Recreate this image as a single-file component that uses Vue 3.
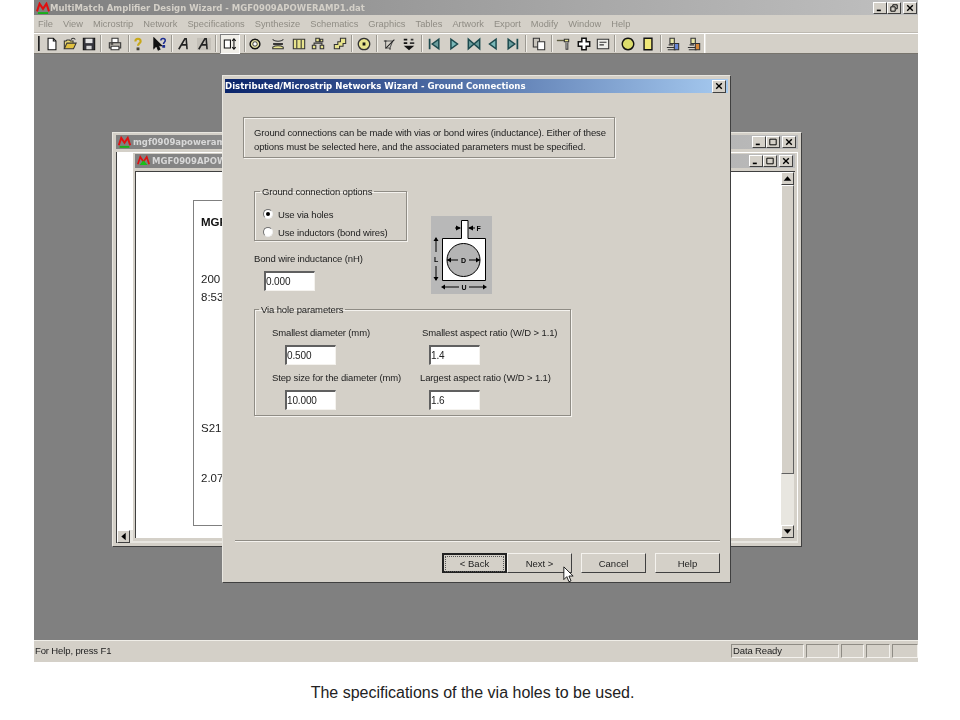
<script setup>
import { computed } from 'vue'

const menus = ['File', 'View', 'Microstrip', 'Network', 'Specifications', 'Synthesize', 'Schematics', 'Graphics', 'Tables', 'Artwork', 'Export', 'Modify', 'Window', 'Help']

const K = '#111'
const Y = '#e8e48c'
const T = '#1c4a4e'
// each icon: list of [path, fill, stroke, optional width] in a 16 box
const icons = {
  newdoc: [['M3.5 1.5h6l3 3v10h-9z', '#fff', K], ['M9.5 1.5v3h3', 'none', K]],
  open: [['M1.5 13.5v-9h2l1-1h3l1 1h3v2', '#e8d878', '#333'], ['M1.5 13.5l3-6.5h10.500l-3 6.5z', '#e0c040', '#333'], ['M9 3c2-2 4-2 5 0', 'none', '#333']],
  save: [['M1.5 1.5h13v13h-13z', '#34343c', K], ['M4 2h8v5H4z', '#e4e4e4', 'none'], ['M5 10h6v4H5z', '#d8d8d8', 'none']],
  print: [['M4.5 1.5h7v5h-7z', '#fff', '#333'], ['M1.5 6.5h13v6h-13z', '#b8b4ac', '#333'], ['M3.5 10.5h9v4h-9z', '#fff', '#333'], ['M3 8h3', 'none', K]],
  help: [['M5 5c0-4 6-4 6 0 0 2-3 2-3 5', 'none', '#c8a818', 2.4], ['M7 12.5h2v2H7z', '#c8a818', '#333']],
  whats: [['M1 1v12l3-3 2 5 2-1-2-4h4z', K, K], ['M9 4c0-3 5-3 5 0 0 2-2 2-2 4M11.5 10h1.5v1.5h-1.5z', 'none', '#1c2c90', 1.7]],
  fontA: [['M2 14L9 2h1.5l1 12M5 9h7', 'none', '#222', 1.8]],
  fontB: [['M0 1h16v14H0z', '#c4c0b8', 'none'], ['M2 14L9 2h1.5l1 12M5 9h7', 'none', '#222', 1.8]],
  toggle: [['M1.5 3.5h7v9h-7z', '#fff', K], ['M12.5 2v12M10.5 4.5l2-2.5 2 2.5M10.5 11.5l2 2.5 2-2.5', 'none', K]],
  ring: [['M8 2.5a5.5 5.5 0 1 0 .01 0z', '#e4e0a0', K, 1.6], ['M8 5.5a2.5 2.5 0 1 0 .01 0z', '#fff', '#555']],
  hourglass: [['M2 2.5c1 3 11 3 12 0', 'none', '#333'], ['M3 7.5h10v1H3z', '#333', '#333'], ['M2 13.5h12v-2c-3-2-9-2-12 0z', Y, '#333']],
  columns: [['M1.5 2.5h13v11h-13z', Y, '#333'], ['M5.5 3v10M10.5 3v10', 'none', '#333']],
  nodes: [['M5.5 1.5h4v4h-4zM1.5 9.5h4v4h-4zM10.5 9.5h4v4h-4zM10.5 2.5h3v3h-3z', Y, '#333'], ['M3.5 9V7h9v2', 'none', '#333']],
  step: [['M8.5 1.5h6v6h-3v3h-4v3h-6v-5h4v-3h3z', Y, '#333']],
  target: [['M8 1.5a6.5 6.5 0 1 0 .01 0z', Y, '#333', 1.5], ['M7 7h2v2H7z', K, K]],
  probe: [['M3 4.5h8l-3 8H3z', 'none', '#555'], ['M3 13L13 3M1 4.5h3M8 14.5v-2', 'none', '#222']],
  stack: [['M2 2h4v2H2zM2 6h4v2H2z', K, 'none'], ['M10 2h3v2h-3zM9 6h5v2H9z', '#333', 'none'], ['M2 10h12l-6 5z', K, 'none']],
  first: [['M3 2v12', 'none', T, 2], ['M13.5 2.5v11L6 8z', '#6a9c9c', T, 1.7]],
  play: [['M4.5 2.5v11L12 8z', '#7ab8b8', T, 1.7]],
  bowtie: [['M1.5 2.5v11L8 8zM14.5 2.5v11L8 8z', '#6a9c9c', T, 1.7]],
  back: [['M11.5 2.5v11L4 8z', '#7ab8b8', T, 1.7]],
  last: [['M13 2v12', 'none', T, 2], ['M2.5 2.5v11L10 8z', '#6a9c9c', T, 1.7]],
  copy: [['M1.5 1.5h7v10h-7z', '#c8c4bc', '#333'], ['M6.5 5.5h8v9h-8z', '#fff', '#333']],
  wire: [['M1 4h9', 'none', '#5a5a40', 1.6], ['M9.5 2.5h5v3h-5z', Y, '#333'], ['M11.5 6v8h2v-8', '#fff', '#333']],
  cross: [['M5.5 1.5h5v4h4v5h-4v4h-5v-4h-4v-5h4z', '#fff', K, 1.7]],
  list: [['M1.5 2.5h13v11h-13z', '#eeeeea', '#333'], ['M4 6h8M4 9h5', 'none', '#333']],
  disc: [['M8 1.5a6.5 6.5 0 1 0 .01 0z', '#dcdc6c', K, 1.6]],
  rect: [['M3.5 1.5h9v13h-9z', '#f0e878', K, 1.6]],
  user1: [['M4.5 1.5h5v6h-5z', '#e8e8a8', '#333'], ['M1 12h9M2 14.5h9M3 9h5', 'none', '#333'], ['M9.5 7.5h5v7h-5z', '#6888d8', '#333']],
  user2: [['M4.5 1.5h5v6h-5z', '#e8e8a8', '#333'], ['M1 12h9M2 14.5h9M3 9h5', 'none', '#333'], ['M9.5 7.5h5v7h-5z', '#d88838', '#333']]
}

const tools = [
  { x: 39, grip: true }, { x: 52, i: 'newdoc' }, { x: 70, i: 'open' }, { x: 89, i: 'save' }, { x: 101 },
  { x: 115, i: 'print' }, { x: 129 }, { x: 138, i: 'help' }, { x: 160, i: 'whats' }, { x: 172 },
  { x: 184, i: 'fontA' }, { x: 204, i: 'fontB' }, { x: 216 }, { x: 230, i: 'toggle', on: true }, { x: 245 },
  { x: 255, i: 'ring' }, { x: 278, i: 'hourglass' }, { x: 299, i: 'columns' }, { x: 318, i: 'nodes' },
  { x: 340, i: 'step' }, { x: 352 }, { x: 364, i: 'target' }, { x: 377 }, { x: 390, i: 'probe' },
  { x: 409, i: 'stack' }, { x: 422 }, { x: 434, i: 'first' }, { x: 454, i: 'play' }, { x: 474, i: 'bowtie' },
  { x: 493, i: 'back' }, { x: 513, i: 'last' }, { x: 526 }, { x: 539, i: 'copy' }, { x: 552 },
  { x: 563, i: 'wire' }, { x: 584, i: 'cross' }, { x: 603, i: 'list' }, { x: 615 }, { x: 628, i: 'disc' },
  { x: 648, i: 'rect' }, { x: 661 }, { x: 673, i: 'user1' }, { x: 694, i: 'user2' }, { x: 705, edge: true }
]

// gaps between items follow from the x centres read off the toolbar
const toolRow = computed(() => {
  let end = 34
  return tools.map(t => {
    const w = t.i ? 14 : 2
    const gap = t.x - w / 2 - end
    end = t.x + w / 2
    return { ...t, gap }
  })
})

const viaFields = [
  { label: 'Smallest diameter (mm)', value: '0.500', cls: 'a' },
  { label: 'Smallest aspect ratio (W/D > 1.1)', value: '1.4', cls: 'b' },
  { label: 'Step size for the diameter (mm)', value: '10.000', cls: 'a' },
  { label: 'Largest aspect ratio (W/D > 1.1)', value: '1.6', cls: 'c' }
]
</script>

<template>
  <div class="page">
    <div class="app">
      <div class="app-title">
        <svg class="logo" viewBox="0 0 16 14"><path d="M1 11L4 2l4 6 4-6 3 9" fill="none" stroke="#e01010" stroke-width="2.4"/><path d="M2 13h12" stroke="#18b018" stroke-width="2.4"/></svg>
        <span class="app-name">MultiMatch Amplifier Design Wizard - MGF0909APOWERAMP1.dat</span>
        <div class="caption-btns">
          <button class="cap"><svg viewBox="0 0 10 10"><path d="M1 8h5" stroke="#000" stroke-width="2"/></svg></button>
          <button class="cap"><svg viewBox="0 0 10 10"><path d="M3.500 2.500V1h5.500v5H7.500M1 3.500h5.500v5.500H1z" fill="none" stroke="#000" stroke-width="1.200"/></svg></button>
          <button class="cap gap2"><svg viewBox="0 0 10 10"><path d="M1.500 1.500l7 7M8.500 1.500l-7 7" stroke="#000" stroke-width="1.700"/></svg></button>
        </div>
      </div>

      <div class="menubar">
        <span v-for="m in menus" :key="m" class="menu-item">{{ m }}</span>
      </div>

      <div class="toolbar">
        <template v-for="t in toolRow" :key="t.x">
          <span v-if="!t.i" class="tb-sep" :class="{ grip: t.grip, edge: t.edge }" :style="{ marginLeft: t.gap + 'px' }"></span>
          <span v-else class="tb-btn" :class="{ on: t.on }" :style="{ marginLeft: t.gap + 'px' }">
            <svg viewBox="0 0 16 16" width="14" height="14">
              <path v-for="(p, n) in icons[t.i]" :key="n" :d="p[0]" :fill="p[1]" :stroke="p[2]" :stroke-width="p[3] || 1.2"/>
            </svg>
          </span>
        </template>
      </div>

      <div class="workspace">
        <!-- mdi windows sit on a free canvas -->
        <div class="mdi outer">
          <div class="mdi-title">
            <svg class="logo small" viewBox="0 0 16 14"><path d="M1 11L4 2l4 6 4-6 3 9" fill="none" stroke="#e01010" stroke-width="2.4"/><path d="M2 13h12" stroke="#18b018" stroke-width="2.4"/></svg>
            <span class="mdi-name">mgf0909apoweramp1</span>
            <div class="mdi-btns">
              <button class="cap"><svg viewBox="0 0 10 10"><path d="M1 8h5" stroke="#000" stroke-width="2"/></svg></button>
              <button class="cap"><svg viewBox="0 0 10 10"><path d="M1 1.500h8v7H1z" fill="none" stroke="#000" stroke-width="1.200"/></svg></button>
              <button class="cap gap2"><svg viewBox="0 0 10 10"><path d="M1.500 1.500l7 7M8.500 1.500l-7 7" stroke="#000" stroke-width="1.700"/></svg></button>
            </div>
          </div>
          <div class="outer-body">
            <div class="outer-client"></div>
            <div class="hscroll">
              <span class="sb-btn"><svg viewBox="0 0 10 10"><path d="M3 5l4-3.500v7z" fill="#000"/></svg></span>
            </div>
          </div>
        </div>

        <div class="mdi inner">
          <div class="mdi-title">
            <svg class="logo small" viewBox="0 0 16 14"><path d="M1 11L4 2l4 6 4-6 3 9" fill="none" stroke="#e01010" stroke-width="2"/><path d="M3 12l5-6 5 6z" fill="#18c018"/></svg>
            <span class="mdi-name">MGF0909APOWERAMP1</span>
            <div class="mdi-btns">
              <button class="cap"><svg viewBox="0 0 10 10"><path d="M1 8h5" stroke="#000" stroke-width="2"/></svg></button>
              <button class="cap"><svg viewBox="0 0 10 10"><path d="M1 1.500h8v7H1z" fill="none" stroke="#000" stroke-width="1.200"/></svg></button>
              <button class="cap gap2"><svg viewBox="0 0 10 10"><path d="M1.500 1.500l7 7M8.500 1.500l-7 7" stroke="#000" stroke-width="1.700"/></svg></button>
            </div>
          </div>
          <div class="inner-main">
            <div class="doc-area">
              <div class="sheet">
                <div class="sheet-head">MGF</div>
                <div class="sheet-line l1">200</div>
                <div class="sheet-line l1b">8:53</div>
                <div class="sheet-line l2">S21</div>
                <div class="sheet-line l3">2.07</div>
              </div>
            </div>
            <div class="vscroll">
              <span class="sb-btn"><svg viewBox="0 0 10 10"><path d="M5 3L1.500 7h7z" fill="#000"/></svg></span>
              <span class="sb-track"><span class="sb-thumb"></span></span>
              <span class="sb-btn"><svg viewBox="0 0 10 10"><path d="M5 7L1.500 3h7z" fill="#000"/></svg></span>
            </div>
          </div>
        </div>

        <div class="dialog">
          <div class="dlg-title">
            <span>Distributed/Microstrip Networks Wizard - Ground Connections</span>
            <button class="cap dlg-close"><svg viewBox="0 0 10 10"><path d="M1.500 1.500l7 7M8.500 1.500l-7 7" stroke="#000" stroke-width="1.700"/></svg></button>
          </div>
          <div class="dlg-body">
            <div class="intro">
              Ground connections can be made with vias or bond wires (inductance). Either of these<br>
              options must be selected here, and the associated parameters must be specified.
            </div>

            <div class="ground-row">
              <div class="ground-left">
                <fieldset class="group ground">
                  <legend>Ground connection options</legend>
                  <label class="radio"><span class="dot checked"></span>Use via holes</label>
                  <label class="radio"><span class="dot"></span>Use inductors (bond wires)</label>
                </fieldset>
                <div class="bond-label">Bond wire inductance (nH)</div>
                <div class="field bond-field">0.000</div>
              </div>
              <svg class="via-pic" viewBox="0 0 61 78">
                <rect width="61" height="78" fill="#b8b8b8"/>
                <path d="M11.500 22.500H30.500V4.500h6.500v18h17.500v42h-43z" fill="#fff" stroke="#000" stroke-width="1"/>
                <circle cx="32.500" cy="44" r="16.500" fill="#b4b4b4" stroke="#000"/>
                <path d="M24 12h5M38 12h6M5 22v14M5 50v14M16 44h11M38 44h11M13 71h15M38 71h15" stroke="#000" fill="none"/>
                <path d="M25 9.500l5 2.500-5 2.500zM42 9.500l-5 2.500 5 2.500zM2.500 25L5 21l2.500 4zM2.500 61L5 65l2.500-4zM20 41.500L16 44l4 2.500zM45 41.500L49 44l-4 2.500zM14 68.500L10 71l4 2.500zM52 68.500L56 71l-4 2.500z" fill="#000"/>
                <text x="45.500" y="15" class="pic-t">F</text>
                <text x="3" y="46" class="pic-t">L</text>
                <text x="30" y="47" class="pic-t">D</text>
                <text x="30.500" y="74" class="pic-t">U</text>
              </svg>
            </div>

            <fieldset class="group via">
              <legend>Via hole parameters</legend>
              <div class="via-grid">
                <div v-for="f in viaFields" :key="f.label" class="via-cell" :class="f.cls">
                  <div class="via-label">{{ f.label }}</div>
                  <div class="field">{{ f.value }}</div>
                </div>
              </div>
            </fieldset>

            <div class="spacer"></div>
            <div class="rule"></div>
            <div class="dlg-buttons">
              <button class="btn default"><span class="focus">&lt; Back</span></button>
              <button class="btn next">Next &gt;</button>
              <button class="btn">Cancel</button>
              <button class="btn">Help</button>
            </div>
          </div>
          <svg class="cursor" viewBox="0 0 13 20"><path d="M1 1v15l3.500-3.500L7 18.500l2.500-1L7 11.800h5z" fill="#fff" stroke="#000"/></svg>
        </div>
      </div>

      <div class="statusbar">
        <span class="st-main">For Help, press F1</span>
        <span class="st-cell data">Data Ready</span>
        <span class="st-cell w1"></span>
        <span class="st-cell w2"></span>
        <span class="st-cell w4"></span>
        <span class="st-cell w3"></span>
      </div>
    </div>
    <p class="caption">The specifications of the via holes to be used.</p>
  </div>
</template>

<style scoped>
.page { width: 960px; height: 720px; background: #fff; padding-left: 34px; box-sizing: border-box; font-family: "Liberation Sans", Arial, sans-serif; overflow: hidden; }
.app { width: 884px; height: 662px; background: #d4d0c8; display: flex; flex-direction: column; filter: blur(0.3px); }

.app-title { height: 15px; flex: none; display: flex; align-items: center; padding-left: 2px; background: linear-gradient(90deg, #7f7f7f, #c0c0c0); }
.logo { width: 14px; height: 12px; flex: none; }
.logo.small { width: 13px; height: 12px; }
.app-name { font: bold 8.500px "DejaVu Sans", sans-serif; color: #d4d0c8; white-space: nowrap; }
.caption-btns { margin-left: auto; margin-right: 1px; display: flex; }
.cap { width: 14px; height: 12px; padding: 1px 2px; background: #d4d0c8; border: 1px solid; border-color: #fff #404040 #404040 #fff; display: block; box-sizing: border-box; }
.cap svg { display: block; width: 8px; height: 8px; }
.gap2 { margin-left: 2px; }

.menubar { height: 18px; flex: none; box-sizing: border-box; display: flex; align-items: center; padding: 0 0 0 4px; gap: 10px; font-size: 9.300px; color: #8f8c84; box-shadow: inset 0 -1px 0 #bdb9b1; }
.menu-item { white-space: nowrap; }

.toolbar { height: 21px; flex: none; box-sizing: border-box; display: flex; align-items: center; border-top: 1px solid #fff; border-bottom: 1px solid #77746d; }
.tb-sep { width: 2px; height: 17px; border-left: 1px solid #9c9992; box-sizing: border-box; background: #f2f0ea; flex: none; }
.tb-sep.grip { border-left-color: #222; background: #555; height: 15px; }
.tb-sep.edge { height: 19px; border-left-color: #fff; background: #e8e6e0; }
.tb-btn { width: 14px; height: 14px; flex: none; position: relative; }
.tb-btn svg { display: block; position: relative; }
.tb-btn.on::before { content: ""; position: absolute; left: -3px; right: -3px; top: -3px; bottom: -3px; background: #f0eee8; border: 1px solid; border-color: #808080 #fff #fff #808080; }

.workspace { flex: 1; position: relative; background: #808080; overflow: hidden; }

.mdi { position: absolute; background: #d4d0c8; box-sizing: border-box; display: flex; flex-direction: column; }
.mdi.outer { left: 78px; top: 78px; width: 690px; height: 415px; padding: 2px 3px 3px; border: 1px solid; border-color: #e8e6e0 #404040 #404040 #e8e6e0; }
.mdi.inner { left: 99px; top: 99px; width: 664px; height: 388px; padding: 1px 2px 3px; }
.mdi-title { height: 14px; flex: none; display: flex; align-items: center; padding-left: 2px; background: linear-gradient(90deg, #808080, #bcbcbc); }
.mdi-name { margin-left: 2px; font: bold 8.500px "DejaVu Sans", sans-serif; color: #d8d8d8; white-space: nowrap; }
.mdi-btns { margin-left: auto; margin-right: 2px; display: flex; }
.outer-body { flex: 1; margin-top: 3px; border-left: 1px solid #404040; display: flex; flex-direction: column; min-height: 0; }
.outer-client { flex: 1; background: #fff; }
.hscroll { height: 13px; flex: none; background: #e8e6e0; }

.inner-main { flex: 1; display: flex; margin-top: 3px; min-height: 0; border-left: 1px solid #404040; border-top: 1px solid #404040; }
.doc-area { flex: 1; background: #fff; padding: 28px 0 0 57px; overflow: hidden; }
.sheet { width: 500px; height: 326px; border: 1px solid #808080; padding: 14px 0 0 7px; box-sizing: border-box; font-size: 11.500px; line-height: 14px; color: #222; }
.sheet-head { font-weight: bold; font-size: 11.500px; white-space: nowrap; color: #111; }
.sheet-line.l1 { margin-top: 43px; }
.sheet-line.l1b { margin-top: 4px; }
.sheet-line.l2 { margin-top: 117px; }
.sheet-line.l3 { margin-top: 36px; }
.vscroll { width: 13px; margin-right: 1px; flex: none; display: flex; flex-direction: column; background: #e8e6e0; }
.sb-btn { width: 13px; height: 13px; background: #d4d0c8; border: 1px solid; border-color: #fff #404040 #404040 #fff; flex: none; box-sizing: border-box; display: block; }
.sb-btn svg { display: block; width: 11px; height: 11px; }
.sb-track { flex: 1; display: block; }
.sb-thumb { display: block; height: 289px; background: #d4d0c8; border: 1px solid; border-color: #fff #606060 #606060 #fff; box-sizing: border-box; }

.dialog { position: absolute; left: 188px; top: 21px; width: 509px; height: 508px; background: #d4d0c8; border: 1px solid; border-color: #e8e6e0 #404040 #404040 #e8e6e0; padding: 3px 2px 2px; box-sizing: border-box; display: flex; flex-direction: column; }
.dlg-title { height: 14px; flex: none; display: flex; align-items: center; justify-content: space-between; padding: 0 2px 0 0; background: linear-gradient(90deg, #0a246a, #a6caf0); color: #fff; font: bold 8.600px "DejaVu Sans", sans-serif; white-space: nowrap; }
.dlg-close { width: 14px; height: 13px; }
.dlg-body { flex: 1; display: flex; flex-direction: column; padding: 24px 8px 7px 18px; font-size: 9.500px; letter-spacing: -0.13px; color: #222; min-height: 0; }

.intro { width: 372px; height: 41px; flex: none; box-sizing: border-box; padding: 8px 0 0 10px; line-height: 13.500px; border: 1px solid #8f8c85; box-shadow: 1px 1px 0 #f4f2ee, inset 1px 1px 0 #f4f2ee; white-space: nowrap; }

.ground-row { display: flex; align-items: flex-start; margin-top: 34px; margin-left: 11px; }
.ground-left { width: 177px; }
.group { margin: 0; min-width: 0; border: 1px solid #8f8c85; box-shadow: 1px 1px 0 #f4f2ee, inset 1px 1px 0 #f4f2ee; box-sizing: border-box; }
.group legend { padding: 0 2px; font-size: 9.500px; }
.group.ground { width: 153px; height: 55px; padding: 8px 0 0 8px; margin-top: -6px; }
.group.ground legend { margin-left: -3px; }
.radio { display: flex; align-items: center; height: 18px; white-space: nowrap; }
.dot { width: 10px; height: 10px; border-radius: 50%; background: #fff; border: 1px solid; border-color: #707070 #f0f0f0 #f0f0f0 #707070; box-sizing: border-box; margin-right: 5px; display: block; position: relative; }
.dot.checked::after { content: ""; position: absolute; left: 2px; top: 2px; width: 4px; height: 4px; border-radius: 50%; background: #000; }
.bond-label { margin-top: 12px; white-space: nowrap; }
.field { width: 51px; height: 20px; box-sizing: border-box; background: #fff; border: 1px solid; border-color: #606060 #f4f2ee #f4f2ee #606060; border-width: 2px 1px 1px 2px; padding: 3px 0 0 0; font-size: 10px; }
.bond-field { margin: 7px 0 0 10px; }
.via-pic { width: 61px; height: 78px; margin-top: 24px; flex: none; }
.pic-t { font: bold 7px "Liberation Sans", sans-serif; }

.group.via { width: 317px; height: 112px; margin: 10px 0 0 11px; padding: 12px 0 0 0; flex: none; }
.group.via legend { margin-left: 4px; }
.via-grid { display: grid; grid-template-columns: 151px 160px; row-gap: 7px; }
.via-cell { padding-left: 17px; }
.via-cell.b { padding-left: 16px; }
.via-cell.c { padding-left: 14px; }
.via-label { white-space: nowrap; height: 14px; }
.via-cell .field { margin: 4px 0 0 13px; }
.via-cell.b .field { margin-left: 7px; }
.via-cell.c .field { margin-left: 9px; }

.spacer { flex: 1; }
.rule { height: 1px; flex: none; background: #8f8c85; box-shadow: 0 1px 0 #f4f2ee; margin: 0 0 0 -8px; }
.dlg-buttons { display: flex; flex: none; justify-content: flex-end; margin-top: 12px; gap: 9px; }
.btn { width: 65px; height: 20px; padding: 0; background: #d4d0c8; border: 1px solid; border-color: #f4f2ee #404040 #404040 #f4f2ee; font: 9.500px "Liberation Sans", sans-serif; color: #222; }
.btn.default { border: 2px solid #222; margin-right: -9px; }
.focus { display: block; margin: 1px; height: 14px; line-height: 13px; border: 1px dotted #555; }

.cursor { position: absolute; left: 340px; top: 490px; width: 11px; height: 17px; }

.statusbar { height: 22px; flex: none; display: flex; align-items: center; padding: 0 0 2px 1px; gap: 2px; border-top: 1px solid #f0eee8; box-sizing: border-box; font-size: 9.500px; letter-spacing: -0.13px; color: #222; }
.st-main { flex: 1; }
.st-cell { height: 14px; border: 1px solid; border-color: #8f8c85 #f4f2ee #f4f2ee #8f8c85; box-sizing: border-box; line-height: 12px; padding-left: 1px; }
.st-cell.data { width: 73px; }
.st-cell.w1 { width: 33px; }
.st-cell.w2 { width: 23px; }
.st-cell.w4 { width: 24px; }
.st-cell.w3 { width: 26px; }

.caption { margin: 22px 0 0 0; width: 877px; text-align: center; font-size: 16px; line-height: 18px; color: #222; }
</style>
